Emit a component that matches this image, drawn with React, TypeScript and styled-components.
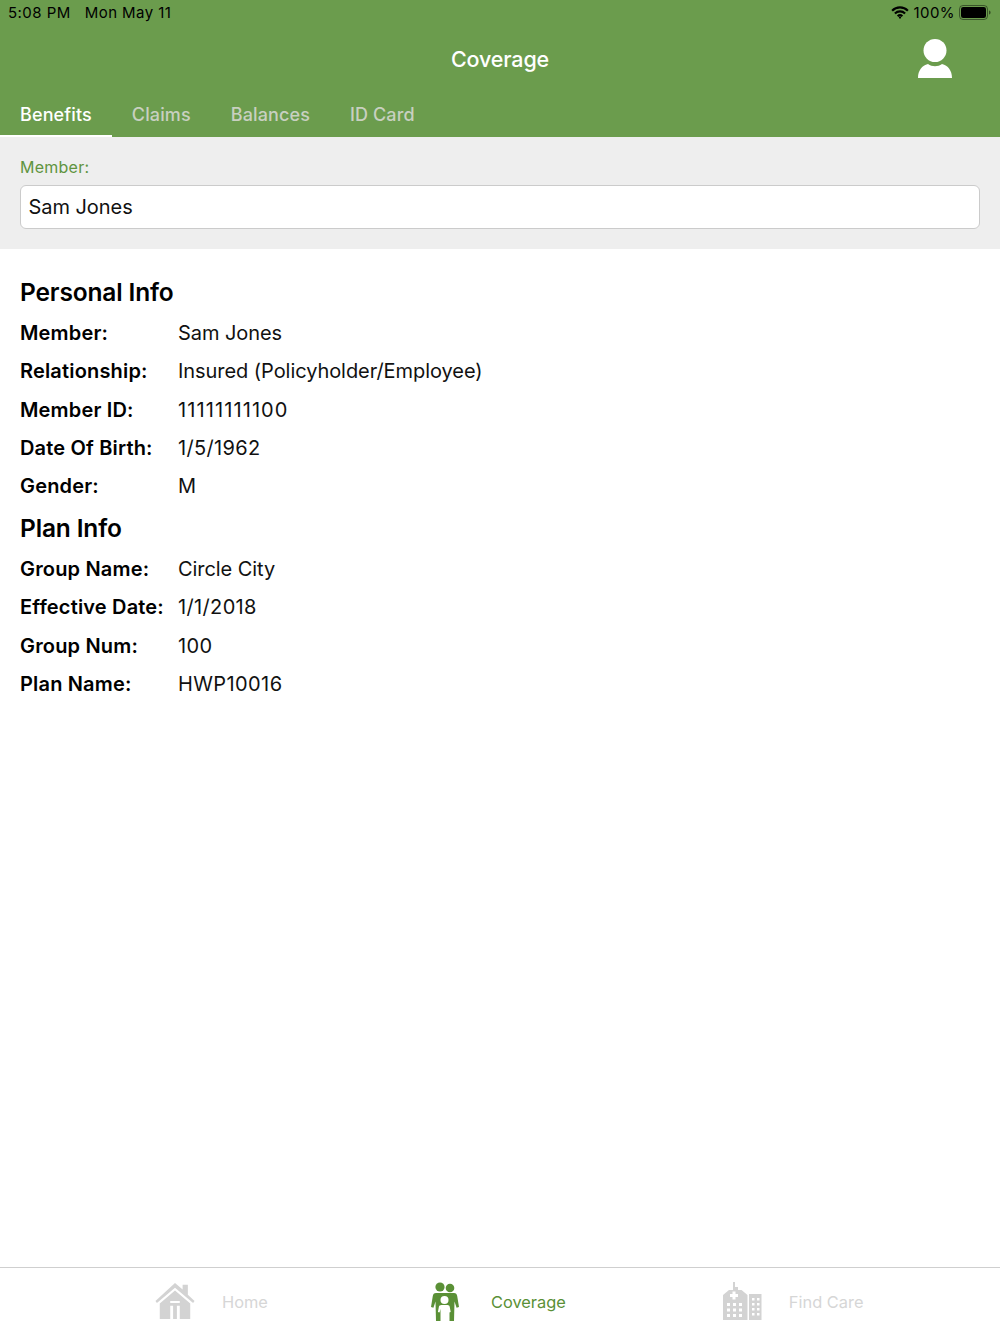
import React from "react";
import styled, { createGlobalStyle } from "styled-components";

const Global = createGlobalStyle`
  html, body { margin: 0; padding: 0; background: #fff; }
  body { font-family: Inter, "Liberation Sans", sans-serif; color: #000; -webkit-font-smoothing: antialiased; }
`;

const Page = styled.div`
  width: 1000px;
  height: 1333px;
  display: flex;
  flex-direction: column;
  overflow: hidden;
`;

const Header = styled.header`
  background: #6b9c4d;
  height: 137px;
  flex: none;
  display: flex;
  flex-direction: column;
`;

const StatusBar = styled.div`
  height: 25px;
  padding: 0 9px 0 8px;
  display: flex;
  align-items: center;
  font-size: 15px;
  letter-spacing: 0.45px;
  color: #000;
`;

const StatusLeft = styled.div`
  display: flex;
  gap: 14px;
`;

const StatusRight = styled.div`
  margin-left: auto;
  display: flex;
  align-items: center;
  gap: 4px;
`;

const TitleBar = styled.div`
  height: 67px;
  padding: 0 48px 0 0;
  position: relative;
  display: flex;
  align-items: center;
  justify-content: flex-end;
`;

const Title = styled.h1`
  position: absolute;
  left: 0;
  right: 0;
  top: 18px;
  margin: 0;
  text-align: center;
  font-size: 21.5px;
  line-height: 32px;
  font-weight: 500;
  letter-spacing: -0.15px;
  color: #fff;
`;

const Tabs = styled.nav`
  display: flex;
  height: 45px;
`;

const Tab = styled.div<{ $active?: boolean }>`
  padding: 0 20px;
  box-sizing: border-box;
  height: 45px;
  line-height: 46px;
  font-size: 18px;
  font-weight: 500;
  letter-spacing: 0.12px;
  white-space: nowrap;
  color: ${(p) => (p.$active ? "#fff" : "#c8d0c0")};
  border-bottom: 2px solid ${(p) => (p.$active ? "#fff" : "transparent")};
`;

const MemberPanel = styled.section`
  background: #eee;
  height: 112px;
  flex: none;
  box-sizing: border-box;
  padding: 20px 20px 0;
`;

const MemberLabel = styled.div`
  font-size: 16px;
  line-height: 20px;
  letter-spacing: 0.25px;
  color: #5f9440;
  margin-bottom: 8px;
`;

const MemberSelect = styled.div`
  height: 44px;
  box-sizing: border-box;
  border: 1.5px solid #cbcbcb;
  border-radius: 6px;
  background: #fff;
  padding: 0 7.5px;
  font-size: 20px;
  line-height: 42.5px;
  letter-spacing: -0.05px;
  color: #111;
`;

const Content = styled.main`
  flex: 1;
  padding: 26.7px 20px 0;
`;

const Heading = styled.h2`
  margin: 0 0 6px;
  font-size: 24.5px;
  line-height: 32px;
  font-weight: 600;
  letter-spacing: -0.15px;
  color: #000;
`;

const Rows = styled.dl`
  margin: 0 0 6px;
`;

const Row = styled.div`
  display: flex;
  height: 38.4px;
  align-items: center;
  font-size: 20px;
`;

const Key = styled.dt`
  width: 158px;
  flex: none;
  font-weight: 600;
  letter-spacing: 0.17px;
  white-space: nowrap;
`;

const Value = styled.dd<{ $spacing: number }>`
  margin: 0;
  letter-spacing: ${(p) => p.$spacing}px;
  color: #111;
`;

const BottomBar = styled.footer`
  height: 66px;
  flex: none;
  box-sizing: border-box;
  border-top: 1px solid #cfcfcf;
  display: flex;
  padding: 3px 0 0 155px;
  gap: 156px;
  align-items: center;
`;

const BottomItem = styled.div<{ $active?: boolean }>`
  display: flex;
  align-items: center;
  gap: 27px;
  font-size: 16.4px;
  color: ${(p) => (p.$active ? "#5a9036" : "#d6d6d6")};
`;

const IconBox = styled.div`
  width: 40px;
  height: 40px;
  display: flex;
  align-items: center;
  justify-content: center;
  margin-top: -2px;
`;

const Wifi = () => (
  <svg width="18" height="13" viewBox="0 0 19 14" fill="none" stroke="#000" strokeWidth="2.3">
    <path d="M1 5a12 12 0 0 1 17 0" />
    <path d="M4 8a8 8 0 0 1 11 0" />
    <path d="M7 11a3.6 3.6 0 0 1 5 0" />
    <circle cx="9.5" cy="12.4" r="1.2" fill="#000" stroke="none" />
  </svg>
);

const Battery = () => (
  <svg width="32" height="15" viewBox="0 0 32 15">
    <rect x="0.5" y="0.5" width="28" height="14" rx="3.5" fill="none" stroke="#000" strokeOpacity="0.45" />
    <rect x="2" y="2" width="25" height="11" rx="2.2" fill="#000" />
    <path d="M30 5.5c1 .3 1.6 1 1.6 2s-.6 1.7-1.6 2z" fill="#000" fillOpacity="0.5" />
  </svg>
);

const Person = () => (
  <svg width="34" height="40" viewBox="0 0 34 40" fill="#fff">
    <circle cx="17" cy="11.500" r="11.500" />
    <path d="M0 39c0-7.500 4-12.500 10-14 2 1.600 4.500 2.200 7 2.200s5-.6 7-2.200c6 1.500 10 6.500 10 14z" />
  </svg>
);

const HomeIcon = () => (
  <svg width="42" height="40" viewBox="0 0 42 40" fill="#d3d3d3">
    <path d="M21 1 29 8V3h5.500v10.500L41.500 20l-1.500 2L21 6 2 22l-1.500-2z" />
    <path fillRule="evenodd" d="M21 9 37 22.500V39H5V22.500zM16 20v2h10v-2zM16 25v14h3V25zM23 25v14h3V25z" />
  </svg>
);

const Family = () => (
  <svg width="30" height="40" viewBox="0 0 30 40">
    <g fill="#5a9036">
      <circle cx="11" cy="6" r="4.600" />
      <circle cx="21" cy="7" r="4.300" />
      <path d="M7 12h18c2 0 2.800 1 3.200 3l1.800 11-2.400.8L25.500 20.500 25 40h-4.500V27h-9v13H7L6.500 20.500 4.400 26.800 2 26l1.800-11C4.200 13 5 12 7 12z" />
    </g>
    <g fill="#fff">
      <circle cx="15.500" cy="19" r="4" />
      <path d="M12.500 24h6c1.300 0 2 .8 2.200 1.800l1 5.200-1.500.5-1.700-4V40h-2.700v-8.500h-1V40H12.100V27.500l-1.700 4-1.500-.5 1-5.200C10.100 24.800 11 24 12.500 24z" />
    </g>
  </svg>
);

const CityIcon = () => (
  <svg width="40" height="40" viewBox="0 0 40 40">
    <path fill="#d3d3d3" fillRule="evenodd" d="M11 1h2v5h3v3h3.500l6 5V39H1V14l6-5h4zM10.500 10.500v2.500H8v3h2.500v2.500h3V16H16v-3h-2.500v-2.500zM5 22v3h3v-3zM11 22v3h3v-3zM17 22v3h3v-3zM5 27.500v3h3v-3zM11 27.500v3h3v-3zM17 27.500v3h3v-3zM5 33v3h3v-3zM11 33v3h3v-3zM17 33v3h3v-3z" />
    <path fill="#d3d3d3" fillRule="evenodd" d="M27 13h12.500v26H27zM30 17v2.500h2.500V17zM35 17v2.500h2.500V17zM30 22v2.500h2.500V22zM35 22v2.500h2.500V22zM30 27v2.500h2.500V27zM35 27v2.500h2.500V27zM30 32v2.500h2.500V32zM35 32v2.500h2.500V32z" />
  </svg>
);

type Info = { k: string; v: string; spacing: number };

const personal: Info[] = [
  { k: "Member:", v: "Sam Jones", spacing: -0.06 },
  { k: "Relationship:", v: "Insured (Policyholder/Employee)", spacing: -0.06 },
  { k: "Member ID:", v: "11111111100", spacing: 1.1 },
  { k: "Date Of Birth:", v: "1/5/1962", spacing: 0.35 },
  { k: "Gender:", v: "M", spacing: 0 },
];

const plan: Info[] = [
  { k: "Group Name:", v: "Circle City", spacing: -0.06 },
  { k: "Effective Date:", v: "1/1/2018", spacing: 0.35 },
  { k: "Group Num:", v: "100", spacing: 0.4 },
  { k: "Plan Name:", v: "HWP10016", spacing: 0.4 },
];

const InfoRows = ({ rows }: { rows: Info[] }) => (
  <Rows>
    {rows.map(({ k, v, spacing }) => (
      <Row key={k}>
        <Key>{k}</Key>
        <Value $spacing={spacing}>{v}</Value>
      </Row>
    ))}
  </Rows>
);

export default function App() {
  return (
    <Page>
      <Global />
      <Header>
        <StatusBar>
          <StatusLeft>
            <span>5:08 PM</span>
            <span>Mon May 11</span>
          </StatusLeft>
          <StatusRight>
            <Wifi />
            <span>100%</span>
            <Battery />
          </StatusRight>
        </StatusBar>
        <TitleBar>
          <Title>Coverage</Title>
          <Person />
        </TitleBar>
        <Tabs>
          <Tab $active>Benefits</Tab>
          <Tab>Claims</Tab>
          <Tab>Balances</Tab>
          <Tab>ID Card</Tab>
        </Tabs>
      </Header>
      <MemberPanel>
        <MemberLabel>Member:</MemberLabel>
        <MemberSelect>Sam Jones</MemberSelect>
      </MemberPanel>
      <Content>
        <Heading>Personal Info</Heading>
        <InfoRows rows={personal} />
        <Heading>Plan Info</Heading>
        <InfoRows rows={plan} />
      </Content>
      <BottomBar>
        <BottomItem>
          <IconBox><HomeIcon /></IconBox>
          Home
        </BottomItem>
        <BottomItem $active>
          <IconBox><Family /></IconBox>
          Coverage
        </BottomItem>
        <BottomItem>
          <IconBox><CityIcon /></IconBox>
          Find Care
        </BottomItem>
      </BottomBar>
    </Page>
  );
}
